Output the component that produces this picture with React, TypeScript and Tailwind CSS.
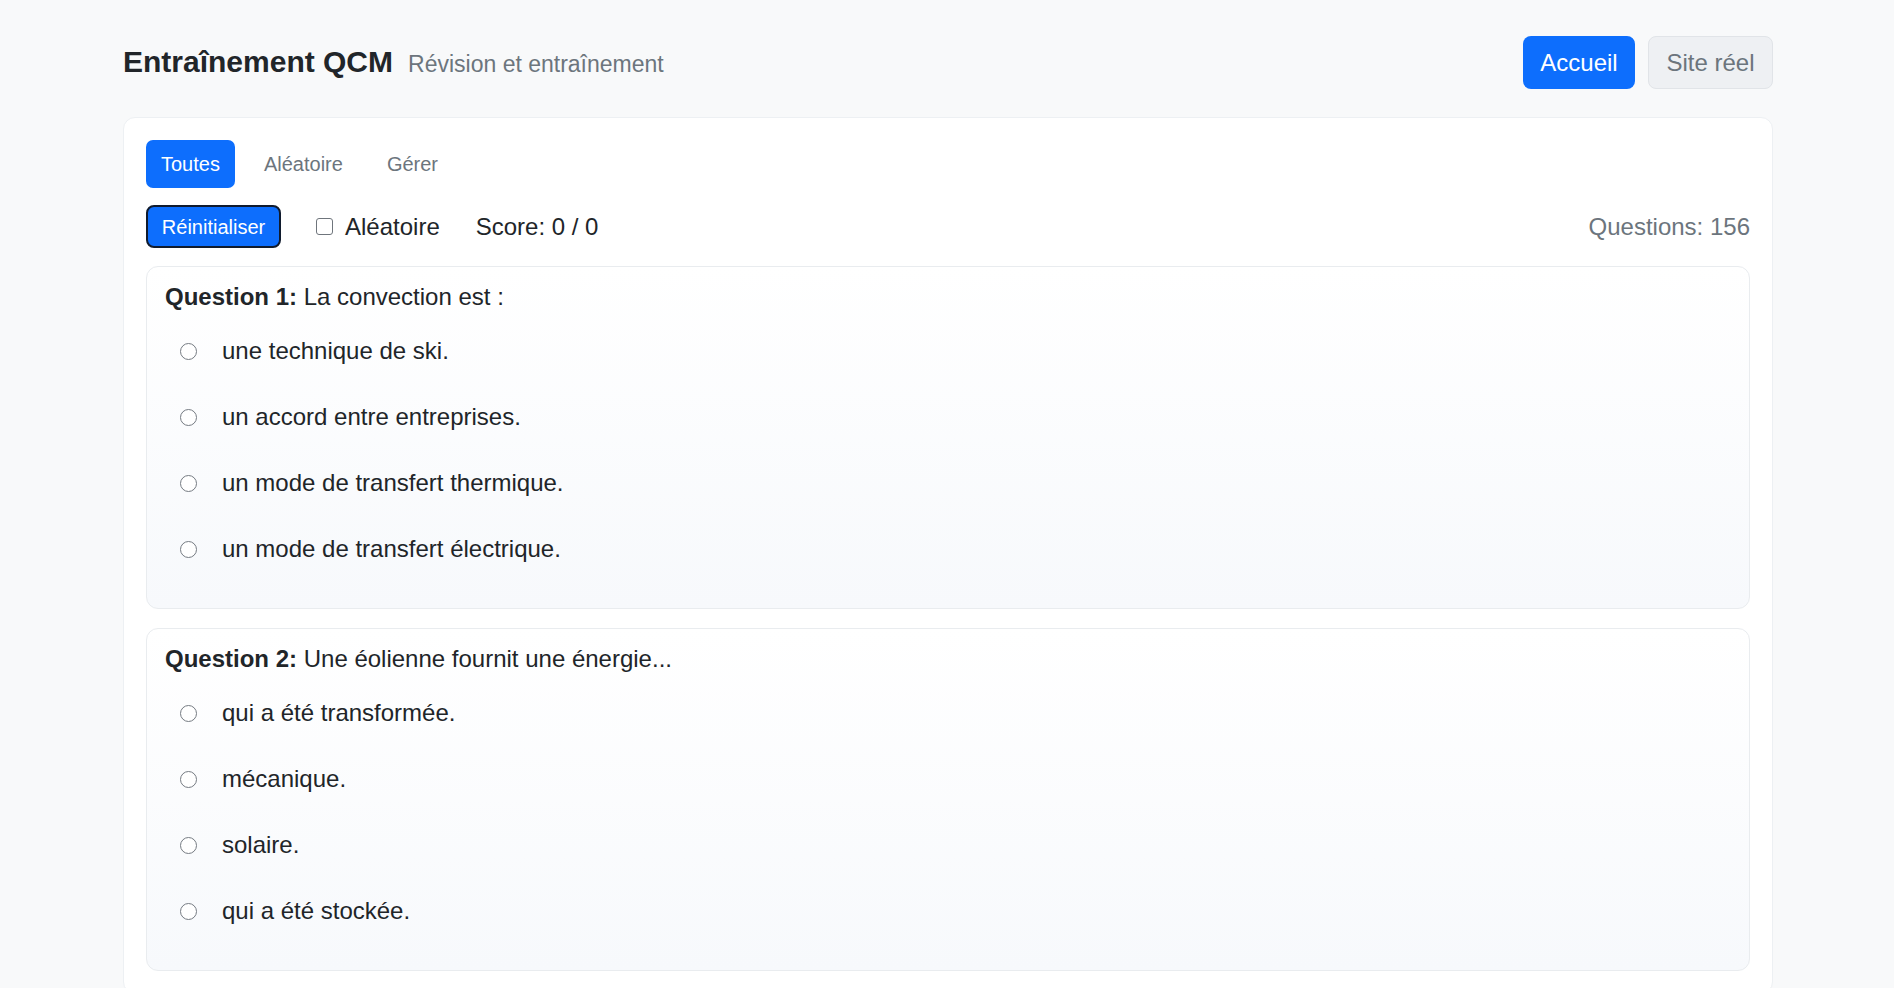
import { useState } from "react";

interface Question {
  id: number;
  text: string;
  options: string[];
}

const questions: Question[] = [
  {
    id: 1,
    text: "La convection est :",
    options: [
      "une technique de ski.",
      "un accord entre entreprises.",
      "un mode de transfert thermique.",
      "un mode de transfert électrique.",
    ],
  },
  {
    id: 2,
    text: "Une éolienne fournit une énergie...",
    options: ["qui a été transformée.", "mécanique.", "solaire.", "qui a été stockée."],
  },
];

function QuestionCard({ q }: { q: Question }) {
  return (
    <div className="rounded-[12px] border border-[#e9ecef] bg-gradient-to-b from-white to-[#f7f9fc] px-[18px] pb-[26px] pt-[12px]">
      <p className="text-[24px] leading-[36px]">
        <strong className="font-bold">Question {q.id}:</strong> {q.text}
      </p>
      <div className="mt-[3px] flex flex-col">
        {q.options.map((opt) => (
          <label key={opt} className="flex h-[66px] items-center px-[15px]">
            <span className="h-[17px] w-[17px] shrink-0 rounded-full border-[1.5px] border-[#757b82] bg-white"></span>
            <span className="ml-[25px] text-[24px] leading-[36px]">{opt}</span>
          </label>
        ))}
      </div>
    </div>
  );
}

export default function App() {
  const [tab, setTab] = useState("Toutes");
  const tabs = ["Toutes", "Aléatoire", "Gérer"];

  return (
    <div className="min-h-screen bg-[#f8f9fa] font-['Liberation_Sans',Arial,sans-serif] text-[#212529]">
      <div className="pl-[123px] pr-[121px] pt-[36px]">
        <header className="flex items-center justify-between">
          <div className="flex items-baseline gap-[15px]">
            <h1 className="text-[30px] font-bold leading-[1.2]">Entraînement QCM</h1>
            <span className="text-[23px] text-[#6c757d]">Révision et entraînement</span>
          </div>
          <div className="flex gap-[13px]">
            <button className="h-[53px] w-[112px] rounded-[8px] bg-[#0d6efd] text-[24px] text-white">Accueil</button>
            <button className="h-[53px] w-[125px] rounded-[8px] border border-[#e1e4e8] bg-[#eef0f3] text-[24px] text-[#6c757d]">
              Site réel
            </button>
          </div>
        </header>

        <main className="mt-[28px] rounded-[12px] border border-[#edf0f3] bg-white p-[22px]">
          <nav className="flex gap-[14px]">
            {tabs.map((t) => (
              <button
                key={t}
                onClick={() => setTab(t)}
                className={
                  t === tab
                    ? "h-[48px] rounded-[7px] bg-[#0d6efd] px-[15px] text-[20px] text-white"
                    : "h-[48px] rounded-[7px] px-[15px] text-[20px] text-[#6c757d]"
                }
              >
                {t}
              </button>
            ))}
          </nav>

          <div className="mt-[17px] flex h-[43px] items-center justify-between">
            <div className="flex items-center">
              <button className="h-[43px] w-[135px] rounded-[8px] border-[2.5px] border-[#101b2e] bg-[#0d6efd] text-[20px] text-white">
                Réinitialiser
              </button>
              <span className="ml-[35px] h-[17px] w-[17px] rounded-[3px] border-[1.5px] border-[#6f757c] bg-white"></span>
              <span className="ml-[12px] text-[24px]">Aléatoire</span>
              <span className="ml-[36px] text-[24px]">Score: 0 / 0</span>
            </div>
            <span className="text-[24px] text-[#6c757d]">Questions: 156</span>
          </div>

          <div className="mt-[18px] flex flex-col gap-[19px]">
            {questions.map((q) => (
              <QuestionCard key={q.id} q={q} />
            ))}
          </div>
        </main>
      </div>
    </div>
  );
}
